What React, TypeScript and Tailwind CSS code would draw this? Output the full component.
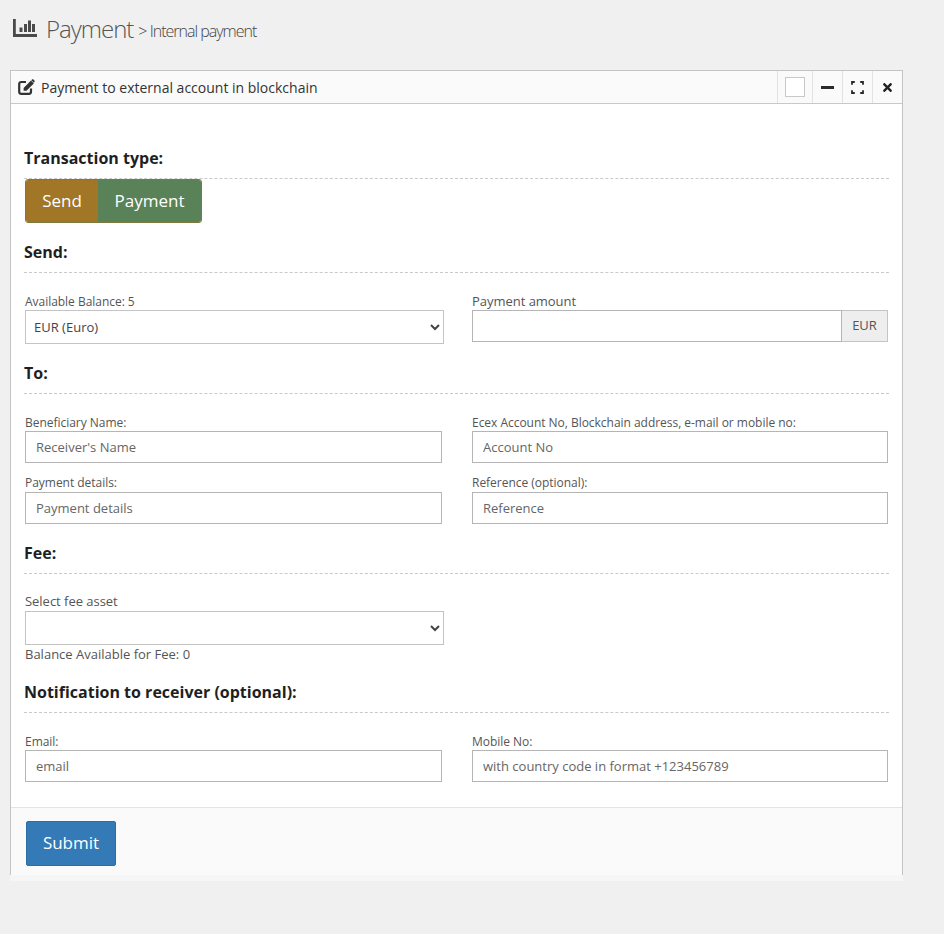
import { FaTimes } from "react-icons/fa";

const inputClass =
  "block w-full h-[32px] border border-[#b5b5b5] bg-white px-[10px] text-[13px] text-[#555] placeholder:text-[#666] outline-none";
const selectClass =
  "block w-full h-[34px] border border-[#c4c4c4] rounded-none bg-white pl-[4px] text-[13px] text-[#444] outline-none";

function SectionTitle({ children, className = "" }: { children: string; className?: string }) {
  return (
    <div className={`h-[41px] flex items-center border-b border-dashed border-[#c9c9c9] ${className}`}>
      <h4 className="text-[16px] leading-[20px] font-bold text-[#1f1f1f]">{children}</h4>
    </div>
  );
}

function FieldLabel({ children, big, raised }: { children: string; big?: boolean; raised?: boolean }) {
  return (
    <label
      className={`block h-[17px] text-[#555] whitespace-nowrap tracking-[-0.03px] ${big ? "text-[13px]" : "text-[12px]"} ${
        raised ? "leading-[15px]" : "leading-[17px]"
      }`}
    >
      {children}
    </label>
  );
}

function TextField({ label, placeholder, raised }: { label: string; placeholder: string; raised?: boolean }) {
  return (
    <div>
      <FieldLabel raised={raised}>{label}</FieldLabel>
      <input className={inputClass} placeholder={placeholder} />
    </div>
  );
}

function ToolButton({ children, className = "" }: { children: React.ReactNode; className?: string }) {
  return (
    <div className={`h-full flex items-center justify-center border-l border-[#e2e2e2] text-[#222] ${className}`}>
      {children}
    </div>
  );
}

export default function App() {
  return (
    <div className="h-[934px] overflow-hidden bg-[#f0f0f0] pl-[10px] font-['Open_Sans',sans-serif]">
      {/* Page heading */}
      <div className="h-[70px] flex items-center pl-[3px] pb-[12px] text-[#555]">
        <svg width="24" height="18" viewBox="0 0 24 18" className="mr-[9px] -mt-[2px] fill-[#4a4a4a]">
          <path d="M0 0h2.8v15H24v3H0z" />
          <rect x="6.5" y="8.5" width="3" height="4.5" />
          <rect x="11" y="5" width="3" height="8" />
          <rect x="15" y="1.5" width="3" height="11.5" />
          <rect x="19" y="5" width="3" height="8" />
        </svg>
        <span className="text-[24px] font-light tracking-[-1px]">Payment</span>
        <span className="ml-[5px] mt-[3px] text-[16px] font-light tracking-[-1px] text-[#444]">&gt; Internal payment</span>
      </div>

      {/* Window */}
      <div className="w-[893px] bg-white">
        <div className="border border-[#c4c4c4] border-b-0">
          <div className="h-[33px] flex items-center justify-between bg-[#fafafa] border-b border-[#c9c9c9]">
            <div className="flex items-center pl-[7px] pt-[1px] text-[14px] text-[#333]">
              <svg width="17" height="16" viewBox="0 0 17 16" className="mr-[6px] -mt-[2px]">
                <path
                  d="M8 3H3.2A2 2 0 0 0 1.2 5v7.8a2 2 0 0 0 2 2H11a2 2 0 0 0 2-2V9.5"
                  fill="none"
                  stroke="#333"
                  strokeWidth="2.2"
                />
                <path d="M13 1.6l2.8 2.8-7.3 7.3H5.6V8.9z" fill="#333" />
                <path d="M14 .6c.4-.4 1-.4 1.4 0l1 1c.4.4.4 1 0 1.4l-.6.7-2.5-2.5z" fill="#333" />
              </svg>
              <span>Payment to external account in blockchain</span>
            </div>
            <div className="h-full flex">
              <ToolButton className="w-[35px]">
                <div className="w-[20px] h-[20px] border border-[#c8c8c8] bg-white" />
              </ToolButton>
              <ToolButton className="w-[30px]">
                <div className="w-[13px] h-[3px] bg-[#2a2a2a]" />
              </ToolButton>
              <ToolButton className="w-[30px]">
                <svg width="13" height="13" viewBox="0 0 13 13" fill="none" stroke="#2a2a2a" strokeWidth="1.8">
                  <path d="M1 3.8V1h2.8M9.2 1H12v2.8M12 9.2V12H9.2M3.8 12H1V9.2" />
                </svg>
              </ToolButton>
              <ToolButton className="w-[30px]">
                <FaTimes className="text-[13px]" />
              </ToolButton>
            </div>
          </div>

          {/* Form body */}
          <div className="px-[13px] pt-[34px]">
            <SectionTitle>Transaction type:</SectionTitle>
            <div className="flex h-[44px] w-[177px] ml-[1px] -mt-[1px] translate-y-[1px] rounded-[3px] overflow-hidden border border-[#7d7a3f] text-[17px] text-white">
              <div className="w-[72px] flex items-center justify-center bg-[#a17627]">Send</div>
              <div className="flex-1 flex items-center justify-center bg-[#5a8258]">Payment</div>
            </div>

            <SectionTitle className="mt-[10px]">Send:</SectionTitle>
            <div className="grid grid-cols-[419px_416px] gap-x-[28px] pl-[1px] mt-[20px]">
              <div>
                <FieldLabel>Available Balance: 5</FieldLabel>
                <select className={selectClass} defaultValue="EUR">
                  <option value="EUR">EUR (Euro)</option>
                </select>
              </div>
              <div>
                <FieldLabel big>Payment amount</FieldLabel>
                <div className="flex">
                  <input className="flex-1 min-w-0 h-[32px] border border-[#b5b5b5] bg-white outline-none" />
                  <span className="w-[46px] h-[32px] flex items-center justify-center border border-l-0 border-[#c4c4c4] bg-[#eee] text-[13px] text-[#555]">
                    EUR
                  </span>
                </div>
              </div>
            </div>

            <SectionTitle className="mt-[9px]">To:</SectionTitle>
            <div className="grid grid-cols-[417px_416px] gap-x-[30px] gap-y-[12px] pl-[1px] mt-[20px]">
              <TextField label="Beneficiary Name:" placeholder="Receiver's Name" />
              <TextField label="Ecex Account No, Blockchain address, e-mail or mobile no:" placeholder="Account No" />
              <TextField label="Payment details:" placeholder="Payment details" raised />
              <TextField label="Reference (optional):" placeholder="Reference" raised />
            </div>

            <SectionTitle className="mt-[9px]">Fee:</SectionTitle>
            <div className="w-[419px] ml-[1px] mt-[20px]">
              <FieldLabel big raised>
                Select fee asset
              </FieldLabel>
              <select className={selectClass}>
                <option></option>
              </select>
              <p className="mt-[1px] h-[17px] leading-[17px] text-[13px] text-[#555]">Balance Available for Fee: 0</p>
            </div>

            <SectionTitle className="mt-[9px]">Notification to receiver (optional):</SectionTitle>
            <div className="grid grid-cols-[417px_416px] gap-x-[30px] pl-[1px] mt-[20px]">
              <TextField label="Email:" placeholder="email" />
              <TextField label="Mobile No:" placeholder="with country code in format +123456789" />
            </div>
          </div>

          {/* Footer */}
          <div className="mt-[25px] h-[68px] border-t border-[#e4e4e4] bg-[#fafafa] pl-[15px] pt-[13px]">
            <button className="w-[90px] h-[45px] pb-[2px] rounded-[2px] border border-[#2e6da4] bg-[#337ab7] text-[17px] text-white">
              Submit
            </button>
          </div>
        </div>
        <div className="h-[6px] bg-[#f6f6f6]" />
      </div>
    </div>
  );
}
